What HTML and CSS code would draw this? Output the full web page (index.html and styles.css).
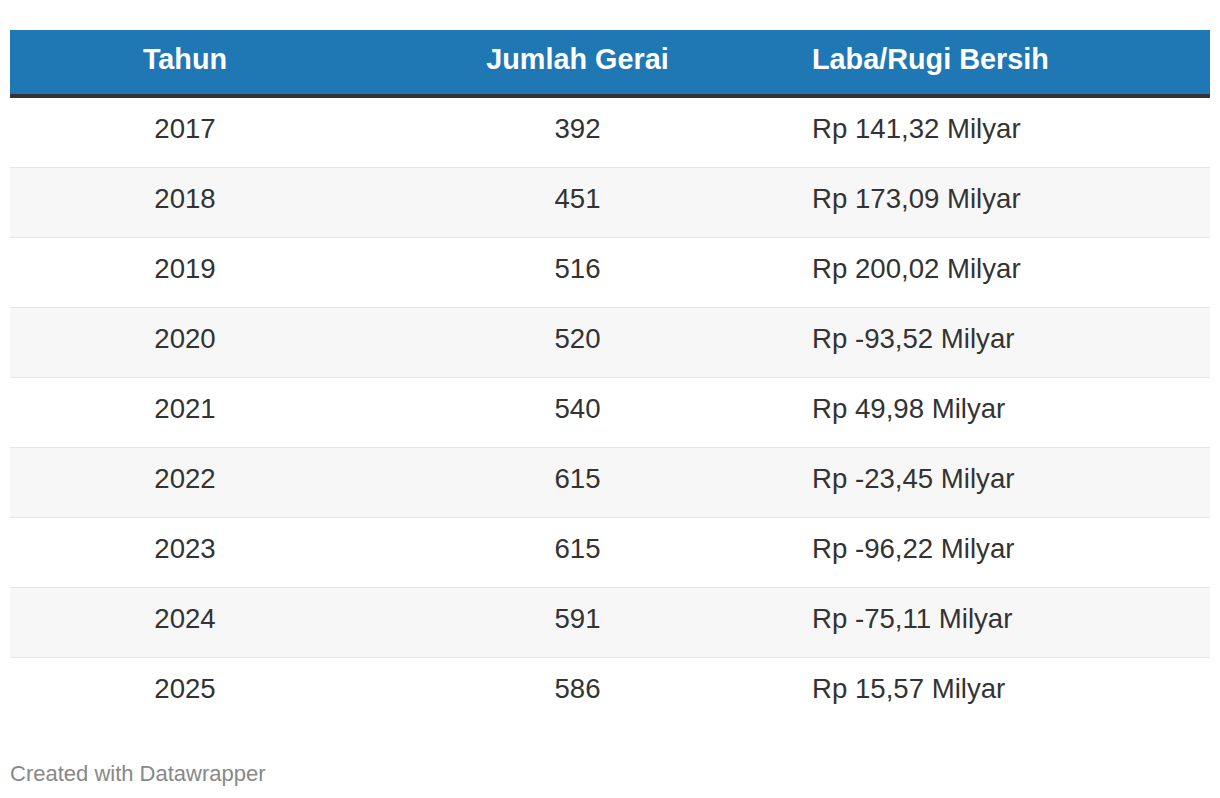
FILE: index.html
```html
<!DOCTYPE html>
<html lang="id">
<head>
<meta charset="utf-8">
<title>Tabel</title>
<link rel="stylesheet" href="styles.css">
</head>
<body>
<div class="chart">
  <table class="dw-table">
    <colgroup>
      <col class="c1">
      <col class="c2">
      <col class="c3">
    </colgroup>
    <thead>
      <tr>
        <th class="center">Tahun</th>
        <th class="center">Jumlah Gerai</th>
        <th class="left">Laba/Rugi Bersih</th>
      </tr>
    </thead>
    <tbody>
      <tr><td class="center">2017</td><td class="center">392</td><td class="left">Rp 141,32 Milyar</td></tr>
      <tr><td class="center">2018</td><td class="center">451</td><td class="left">Rp 173,09 Milyar</td></tr>
      <tr><td class="center">2019</td><td class="center">516</td><td class="left">Rp 200,02 Milyar</td></tr>
      <tr><td class="center">2020</td><td class="center">520</td><td class="left">Rp -93,52 Milyar</td></tr>
      <tr><td class="center">2021</td><td class="center">540</td><td class="left">Rp 49,98 Milyar</td></tr>
      <tr><td class="center">2022</td><td class="center">615</td><td class="left">Rp -23,45 Milyar</td></tr>
      <tr><td class="center">2023</td><td class="center">615</td><td class="left">Rp -96,22 Milyar</td></tr>
      <tr><td class="center">2024</td><td class="center">591</td><td class="left">Rp -75,11 Milyar</td></tr>
      <tr><td class="center">2025</td><td class="center">586</td><td class="left">Rp 15,57 Milyar</td></tr>
    </tbody>
  </table>
  <div class="footer">Created with Datawrapper</div>
</div>
</body>
</html>
```

FILE: styles.css
```css
html, body {
  margin: 0;
  padding: 0;
  background: #ffffff;
}

body {
  font-family: "Liberation Sans", Arial, Helvetica, sans-serif;
  color: #333333;
}

.chart {
  padding: 30px 10px 0 10px;
}

.dw-table {
  width: 1200px;
  table-layout: fixed;
  border-collapse: separate;
  border-spacing: 0;
}

.c1 { width: 350px; }
.c2 { width: 435px; }
.c3 { width: auto; }

.dw-table th {
  background: #1f77b4;
  color: #ffffff;
  font-weight: bold;
  font-size: 28.8px;
  line-height: 32px;
  padding: 13px 17px 19px 17px;
  border-bottom: 4px solid #333333;
  white-space: nowrap;
}

.dw-table td {
  font-size: 27.6px;
  line-height: 30px;
  padding: 16px 17px 23px 17px;
  border-bottom: 1px solid #e6e6e6;
  white-space: nowrap;
}

.dw-table tbody tr:nth-child(even) td {
  background: #f7f7f7;
}

.dw-table tbody tr:last-child td {
  border-bottom: none;
}

.center { text-align: center; }
.left { text-align: left; }

.footer {
  margin-top: 34px;
  font-size: 22px;
  line-height: 26px;
  color: #888888;
}
```
